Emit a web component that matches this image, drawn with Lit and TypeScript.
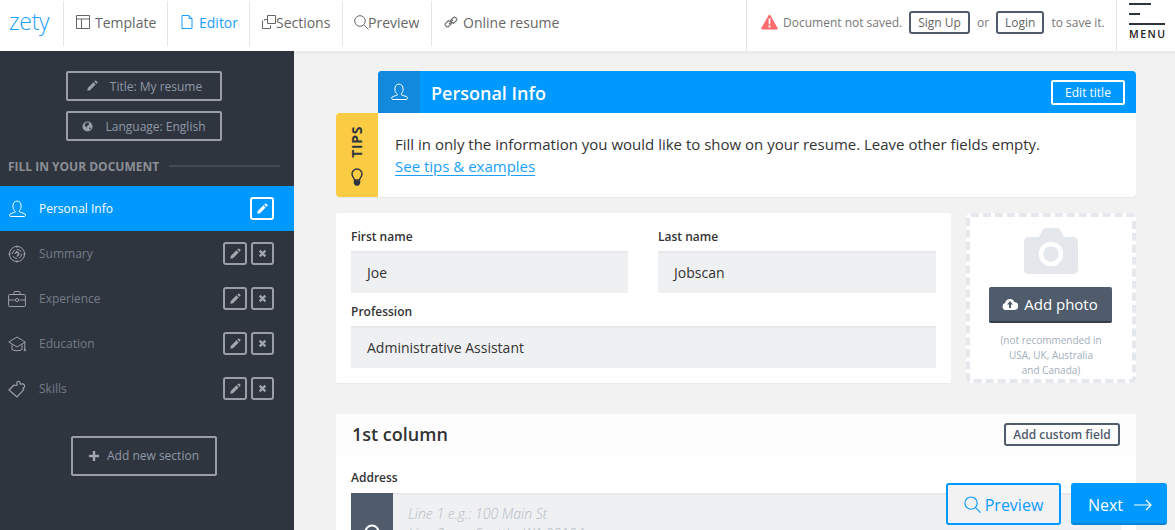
import { LitElement, html, css, svg } from "lit";
import { customElement } from "lit/decorators.js";

const pencil = svg`<path d="M1.500 12.500l.6-3.200 6.600-6.600 2.600 2.600-6.600 6.600zM9.600 1.800l1-1a1 1 0 0 1 1.300 0l1.300 1.300a1 1 0 0 1 0 1.300l-1 1z" fill="currentColor"/>`;
const pencilIcon = html`<svg viewBox="0 0 14 14" width="12" height="12">${pencil}</svg>`;
const person = html`<svg viewBox="0 0 18 18" width="18" height="18" fill="none" stroke="currentColor" stroke-width="1"><path d="M6.600 10.600C5.300 9.300 4.900 7.700 4.900 6c0-3 1.700-4.900 4.100-4.900s4.100 1.900 4.100 4.900c0 1.700-.4 3.300-1.700 4.600v1.200c0 .5 4.800 1.300 5.800 2.400.9 1 .1 2.300-1 2.300H3c-1.200 0-1.900-1.300-1-2.300 1-1.100 5.600-1.900 5.600-2.400z" /></svg>`;

interface Sec { name: string; icon: unknown; }
const sections: Sec[] = [
  { name: "Summary", icon: html`<svg viewBox="0 0 18 18" width="18" height="18" fill="none" stroke="currentColor" stroke-width="1"><circle cx="9" cy="9" r="7.600"/><circle cx="9" cy="9" r="4.600" stroke-dasharray="5 2"/><path d="M7 8.500l2-2 2 2.600-2 2.400" stroke-width="1.400"/><path d="M9 .4v2.400M9 15.200v2.400M.4 9h2.400M15.200 9h2.400"/></svg>` },
  { name: "Experience", icon: html`<svg viewBox="0 0 18 18" width="18" height="18" fill="none" stroke="currentColor" stroke-width="1"><rect x=".6" y="4.500" width="16.800" height="12" rx=".8"/><path d="M6 4.500V2.200c0-.4.3-.7.7-.7h4.600c.4 0 .7.3.7.7v2.300M.6 10h6M11.400 10h6"/><circle cx="9" cy="10" r="1.600"/></svg>` },
  { name: "Education", icon: html`<svg viewBox="0 0 18 18" width="18" height="18" fill="none" stroke="currentColor" stroke-width="1"><path d="M9 2L.8 7 9 12l8.200-5zM4 9.500v5c1.500 1.600 8.500 1.600 10 0v-5M16.800 7.500v7"/><circle cx="16.800" cy="15" r=".8" fill="currentColor"/></svg>` },
  { name: "Skills", icon: html`<svg viewBox="0 0 18 18" width="18" height="18" fill="none" stroke="currentColor" stroke-width="1.200"><path d="M1 10L6 5c1 .5 2 1 3 0 .6-.8 0-1.500-.3-2.200-.2-1.300 2.800-2 3.300-.4.3.8-.3 1.200.3 1.700.7.5 1.500-.5 2.500-.3 1.500.3 2 1.900 1.700 3-.2.8-1.200.8-1.500 1.400-.2.5.3 1.100.7 1.600L9 17z"/></svg>` },
];

@customElement("app-root")
export class AppRoot extends LitElement {
  static styles = css`
    :host { display: flex; flex-direction: column; height: 530px; overflow: hidden; position: relative; font-family: "Open Sans", sans-serif; background: #f2f2f2; }
    * { box-sizing: border-box; }
    svg { display: block; flex: none; }
    .top { flex: none; height: 51px; display: flex; background: #fff; color: #666; }
    .logo { width: 63px; padding: 0 0 10px 9px; color: #1a9fff; font-size: 23px; font-weight: 300; letter-spacing: -.3px; display: flex; align-items: center; }
    .nav { display: flex; align-items: center; font-size: 14px; height: 45px; margin-top: 1px; padding-bottom: 3px; border-left: 1px solid #e5e5e5; }
    .n1 { width: 104px; padding-left: 12px; gap: 5px; }
    .n2 { width: 82px; padding-left: 13px; gap: 6px; color: #1a9fff; }
    .n3 { width: 93px; padding-left: 12px; gap: 0; letter-spacing: -.02px; }
    .n3 svg { margin-right: -1px; }
    .n4 { width: 89px; padding-left: 11px; }
    .n4 svg { margin-right: -1px; }
    .n5 { width: 315px; padding-left: 12px; gap: 5px; }
    .status { width: 370px; display: flex; align-items: center; font-size: 12px; color: #777; padding: 0 0 7px 14px; height: 51px; border-left: 1px solid #e5e5e5; }
    .status .warn { margin-right: 5px; }
    .ob { border: 2px solid #505c6b; border-radius: 3px; height: 23px; padding: 0 7px; display: flex; align-items: center; color: #666; }
    .or { margin: 0 7px 0 7px; }
    .s1 { margin-left: 7px; }
    .s2 { margin-left: 7px; }
    .menu { width: 59px; border-left: 1px solid #e5e5e5; padding: 3px 0 0 12px; position: relative; }
    .menu i { display: block; height: 2px; background: #2e353f; }
    .l1 { width: 22px; }
    .l2 { width: 11px; margin-top: 8px; }
    .l3 { width: 36px; margin-top: 8px; }
    .menu .t { font-size: 10.500px; font-weight: 600; letter-spacing: 1.500px; margin-top: 2px; line-height: 14px; color: #222; }
    .body { flex: 1; display: flex; min-height: 0; }
    .side { width: 294px; flex: none; background: #2e353f; color: #8a93a0; font-size: 12px; padding-top: 20px; }
    .sb { display: flex; align-items: center; justify-content: center; width: 156px; height: 30px; margin: 0 0 10px 66px; border: 2px solid #9b9ea4; border-radius: 2px; color: #8f98a5; gap: 12px; }
    .sb svg { color: #9aa0a8; }
    .head { display: flex; align-items: center; gap: 10px; margin: 0 14px 0 8px; height: 35px; padding-bottom: 5px; font-weight: 700; color: #8c8f95; }
    .head::after { content: ""; flex: 1; height: 2px; background: #444a54; }
    .row { height: 45px; display: flex; align-items: center; padding: 0 20px 0 8px; color: #757c87; }
    .row.on { background: #0099ff; color: #fff; }
    .row .nm { flex: 1; margin-left: 13px; }
    .row > svg { color: #9ea2a8; }
    .row.on > svg { color: #fff; }
    .acts { display: flex; gap: 4px; }
    .ib { width: 24px; height: 23px; border: 2px solid #9b9ea4; border-radius: 3px; display: flex; align-items: center; justify-content: center; color: #a4a8ae; }
    .ib.x { width: 23px; }
    .on .ib { border-color: #fff; color: #fff; }
    .add { display: flex; align-items: center; justify-content: center; gap: 8px; width: 146px; height: 40px; margin: 25px 0 0 71px; border: 2px solid #9b9ea4; border-radius: 2px; color: #8f98a5; padding-bottom: 1px; }
    .main { flex: 1; border-top: 3px solid #ebebeb; padding: 17px 0 0 42px; color: #333; overflow: hidden; position: relative; }
    .ptitle { margin-left: 42px; width: 758px; height: 42px; background: #0099ff; border-radius: 4px 4px 0 0; color: #fff; display: flex; align-items: center; padding-right: 11px; }
    .pic { width: 42px; height: 42px; background: #1289dd; display: flex; align-items: center; justify-content: center; border-radius: 4px 0 0 0; }
    .ptitle h1 { flex: 1; margin: 1px 0 0 11px; font-size: 18px; font-weight: 600; }
    .et { width: 74px; height: 25px; border: 2px solid #fff; border-radius: 2px; font-size: 12px; display: flex; align-items: center; justify-content: center; }
    .tips { display: flex; width: 800px; height: 84px; background: #fff; border-radius: 0 0 4px 4px; box-shadow: 0 1px 0 #e6e9ee; }
    .ty { width: 42px; background: #fbcb43; border-radius: 4px 0 0 4px; display: flex; flex-direction: column; align-items: center; padding-top: 13px; gap: 10px; color: #2e353f; }
    .ty span { writing-mode: vertical-rl; transform: rotate(180deg); font-size: 14px; font-weight: 700; letter-spacing: .6px; line-height: 16px; }
    .tx { padding: 20px 0 0 17px; font-size: 15px; line-height: 23px; color: #333; }
    .tx a { display: block; color: #1a9fff; text-decoration: underline; text-underline-offset: 3px; width: max-content; margin-top: -1px; }
    .two { display: flex; gap: 15px; margin-top: 16px; width: 800px; }
    .card { width: 615px; height: 170px; background: #fff; border-radius: 2px; padding: 16px 15px 0; box-shadow: 0 1px 0 #e9ebef; }
    .fr { display: flex; gap: 30px; }
    .f { width: 277px; flex: none; }
    .f2 { width: 278px; flex: none; }
    label { display: block; font-size: 12px; font-weight: 600; line-height: 16px; color: #333; margin-bottom: 6px; }
    .inp { height: 42px; background: #eff0f2; border-top: 2px solid #e6e8eb; padding: 0 0 2px 16px; font-size: 14px; display: flex; align-items: center; color: #333; }
    .mt { margin-top: 11px; }
    .photo { width: 170px; height: 170px; background: #fff; border: 4px dashed #e5e8ec; border-radius: 5px; display: flex; flex-direction: column; align-items: center; padding-top: 10px; }
    .ab { width: 123px; height: 36px; margin: 13px 2px 0 0; background: #505c6b; border-bottom: 2px solid #333c48; border-radius: 2px; color: #fff; font-size: 15px; display: flex; align-items: center; justify-content: center; gap: 6px; flex: none; }
    .note { margin-top: 10px; font-size: 10px; line-height: 15px; color: #a3aebd; text-align: center; }
    .col { margin-top: 31px; width: 800px; background: #fff; height: 200px; }
    .ch { height: 41px; background: #fdfdfd; display: flex; align-items: center; justify-content: space-between; padding: 0 16px 0 16px; }
    .ch h2 { margin: -2px 0 0; font-size: 18px; font-weight: 600; color: #333; }
    .acf { width: 116px; height: 23px; border: 2px solid #505c6b; border-radius: 3px; font-size: 12px; font-weight: 600; color: #505c6b; display: flex; align-items: center; justify-content: center; }
    .addr { padding: 15px 15px 0; }
    .addr label { margin-bottom: 7px; }
    .ai { display: flex; height: 60px; background: #eff0f2; border-top: 2px solid #e6e8eb; }
    .bx { width: 42px; background: #505c6b; margin-top: -2px; height: 62px; display: flex; justify-content: center; padding-top: 31px; color: #fff; }
    .ph { padding: 9px 0 0 15px; font-size: 14px; font-style: italic; font-weight: 300; line-height: 20px; color: #b4bcc7; }
    .fab { position: absolute; top: 483px; height: 42px; border-radius: 3px; display: flex; align-items: center; justify-content: center; font-size: 16px; padding-top: 1px; }
    .fp { left: 946px; width: 115px; border: 2px solid #0099ff; background: #f2f2f2; color: #0a9bff; gap: 4px; }
    .fn { left: 1071px; width: 96px; background: #0099ff; border-bottom: 2px solid #0a84d8; color: #fff; gap: 11px; padding: 3px 0 0 2px; }
  `;

  render() {
    return html`
      <div class="top">
        <div class="logo">zety</div>
        <div class="nav n1">
          <svg viewBox="0 0 14 14" width="14" height="14" fill="none" stroke="#666" stroke-width="1"><path d="M.5.5h13v13H.5zM.5 4h13M5.500 4v9.500"/></svg>Template</div>
        <div class="nav n2">
          <svg viewBox="0 0 12 14" width="12" height="14" fill="none" stroke="#1a9fff" stroke-width="1"><path d="M1 .5h7l3 3v10H1zM8 .5v3h3"/></svg>Editor</div>
        <div class="nav n3">
          <svg viewBox="0 0 15 14" width="15" height="14" fill="none" stroke="#666" stroke-width="1"><path d="M5.500.5h8v8h-8zM5.500 4.500h-3v1M.5 5.500v8h8v-3"/></svg>Sections</div>
        <div class="nav n4">
          <svg viewBox="0 0 15 15" width="15" height="15" fill="none" stroke="#666" stroke-width="1"><circle cx="6" cy="6" r="5.300"/><path d="M10 10l4.500 4.500"/></svg>Preview</div>
        <div class="nav n5">
          <svg viewBox="0 0 14 14" width="14" height="14" fill="none" stroke="#777" stroke-width="1.200"><path d="M1.500 8.500l3-3 3 3-3 3a1.400 1.400 0 0 1-2 0l-1-1a1.400 1.400 0 0 1 0-2zM6.500 5.500l3-3a1.400 1.400 0 0 1 2 0l1 1a1.400 1.400 0 0 1 0 2l-3 3-3-3zM5 9l4-4"/></svg>Online resume</div>
        <div class="status">
          <svg class="warn" viewBox="0 0 17 16" width="17" height="16"><path d="M8.500.8a1 1 0 0 1 .9.5l7.200 12.800a1 1 0 0 1-.9 1.500H1.300a1 1 0 0 1-.9-1.500L7.600 1.300a1 1 0 0 1 .9-.5z" fill="#ff6b6b"/><path d="M7.500 4.500h2l-.3 6h-1.400zM7.500 11.500h2v2h-2z" fill="#fff"/></svg>
          <span>Document not saved.</span><span class="ob s1">Sign Up</span><span class="or">or</span><span class="ob">Login</span><span class="s2">to save it.</span>
        </div>
        <div class="menu">
          <i class="l1"></i><i class="l2"></i><i class="l3"></i>
          <div class="t">MENU</div>
        </div>
      </div>
      <div class="body">
        <aside class="side">
          <div class="sb">${pencilIcon}<span>Title: My resume</span></div>
          <div class="sb"><svg viewBox="0 0 12 12" width="11" height="11"><circle cx="6" cy="6" r="5.500" fill="currentColor"/><path d="M4 2l3-.5 1 2-2 1.500-1 2-2-2zM8 7l2 .5-1.500 2.500z" fill="#2e353f"/></svg><span>Language: English</span></div>
          <div class="head">FILL IN YOUR DOCUMENT</div>
          <div class="row on">${person}<span class="nm">Personal Info</span><div class="ib">${pencilIcon}</div></div>
          ${sections.map(s => html`<div class="row">${s.icon}<span class="nm">${s.name}</span><div class="acts"><div class="ib">${pencilIcon}</div><div class="ib x"><svg viewBox="0 0 10 10" width="9" height="9"><path d="M1.800 1.800l6.400 6.400M8.200 1.800L1.800 8.200" stroke="currentColor" stroke-width="2.400"/></svg></div></div></div>`)}
          <div class="add"><svg viewBox="0 0 10 10" width="10" height="10"><path d="M5 0v10M0 5h10" stroke="#a4a8ae" stroke-width="2.400"/></svg><span>Add new section</span></div>
        </aside>
        <main class="main">
          <div class="ptitle"><div class="pic">${person}</div><h1>Personal Info</h1><div class="et">Edit title</div></div>
          <div class="tips">
            <div class="ty"><span>TIPS</span><svg viewBox="0 0 12 18" width="12" height="18" fill="none" stroke="#2e353f" stroke-width="1.400"><path d="M3.500 12c0-2-2.500-3-2.500-6a5 5 0 0 1 10 0c0 3-2.500 4-2.500 6z"/><path d="M3.500 13h5v2.500l-1.500 1.500h-2l-1.500-1.500z" fill="#2e353f"/></svg></div>
            <div class="tx">Fill in only the information you would like to show on your resume. Leave other fields empty.<a>See tips &amp; examples</a></div>
          </div>
          <div class="two">
            <div class="card">
              <div class="fr">
                <div class="f"><label>First name</label><div class="inp">Joe</div></div>
                <div class="f2"><label>Last name</label><div class="inp">Jobscan</div></div>
              </div>
              <div class="mt"><label>Profession</label><div class="inp">Administrative Assistant</div></div>
            </div>
            <div class="photo">
              <svg viewBox="0 0 54 47" width="54" height="47"><path d="M5 10h10l3-6c1-2 2-3 4-3h11c2 0 3 1 4 3l3 6h9c3 0 5 2 5 5v27c0 3-2 5-5 5H5c-3 0-5-2-5-5V15c0-3 2-5 5-5z" fill="#e4e7eb"/><circle cx="27" cy="27" r="10" fill="none" stroke="#fff" stroke-width="4.500"/></svg>
              <div class="ab"><svg viewBox="0 0 16 12" width="16" height="12"><path d="M4 12a3.500 3.500 0 0 1-.8-6.900A4.800 4.800 0 0 1 12.400 4 4 4 0 0 1 12 12z" fill="#fff"/><path d="M8 3l3 3.500H9V10H7V6.500H5z" fill="#505c6b"/></svg>Add photo</div>
              <div class="note">(not recommended in<br>USA, UK, Australia<br>and Canada)</div>
            </div>
          </div>
          <section class="col">
            <div class="ch"><h2>1st column</h2><div class="acf">Add custom field</div></div>
            <div class="addr">
              <label>Address</label>
              <div class="ai"><div class="bx"><svg viewBox="0 0 16 16" width="16" height="16" fill="none" stroke="#fff" stroke-width="2"><circle cx="8" cy="8" r="6.500"/></svg></div><div class="ph">Line 1 e.g.: 100 Main St<br>Line 2 e.g.: Seattle, WA 98104</div></div>
            </div>
          </section>
        </main>
      </div>
      <div class="fab fp"><svg viewBox="0 0 18 18" width="17" height="17" fill="none" stroke="#0a9bff" stroke-width="1.200"><circle cx="7.500" cy="7.500" r="6.500"/><path d="M12 12l5.500 5.500"/></svg>Preview</div>
      <div class="fab fn">Next<svg viewBox="0 0 18 12" width="18" height="12" fill="none" stroke="#fff" stroke-width="1.200"><path d="M0 6h17M12 1l5 5-5 5"/></svg></div>
    `;
  }
}
